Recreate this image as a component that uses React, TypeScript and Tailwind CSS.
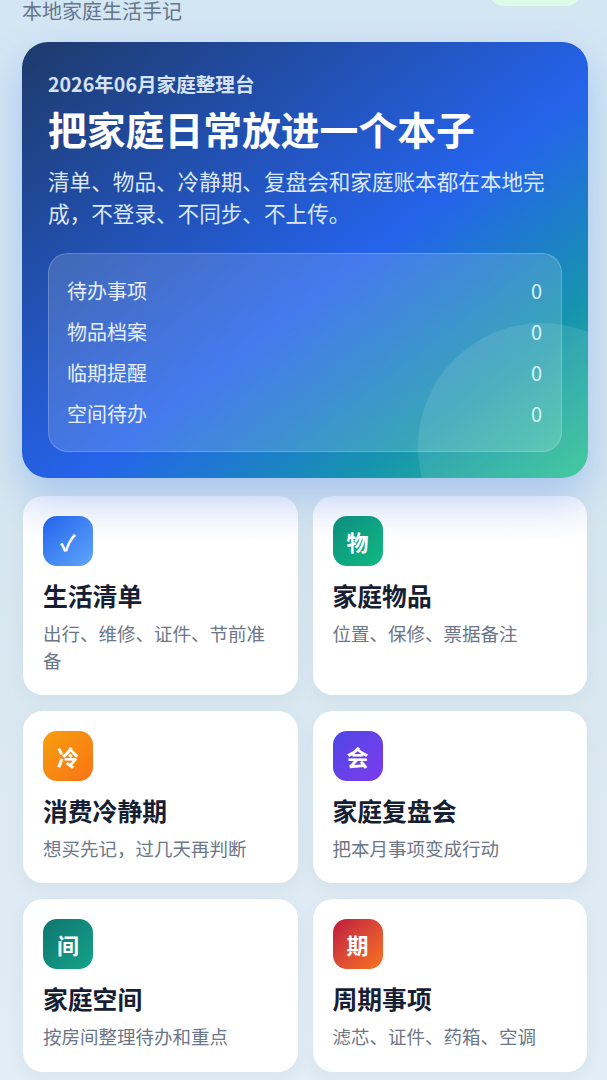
const stats = ['待办事项', '物品档案', '临期提醒', '空间待办']

type Feature = {
  title: string
  desc: string
  icon: string
  color: string
  height: string
  tint?: boolean
}

const features: Feature[] = [
  { title: '生活清单', desc: '出行、维修、证件、节前准备', icon: '✓', color: 'from-[#2563eb] to-[#60a5fa]', height: 'h-[199px]', tint: true },
  { title: '家庭物品', desc: '位置、保修、票据备注', icon: '物', color: 'from-[#0f8f7f] to-[#10b981]', height: 'h-[199px]', tint: true },
  { title: '消费冷静期', desc: '想买先记，过几天再判断', icon: '冷', color: 'from-[#f59e0b] to-[#f97316]', height: 'h-[172px]' },
  { title: '家庭复盘会', desc: '把本月事项变成行动', icon: '会', color: 'from-[#4f46e5] to-[#7c3aed]', height: 'h-[172px]' },
  { title: '家庭空间', desc: '按房间整理待办和重点', icon: '间', color: 'from-[#0f766e] to-[#14a38b]', height: 'h-[173px]' },
  { title: '周期事项', desc: '滤芯、证件、药箱、空调', icon: '期', color: 'from-[#be123c] to-[#f97316]', height: 'h-[173px]' },
]

function FeatureCard({ item }: { item: Feature }) {
  return (
    <div className={`${item.height} rounded-[20px] px-[20px] pt-[20px] shadow-[0_6px_16px_rgba(100,130,170,0.07)] ${item.tint ? 'bg-gradient-to-b from-[#f0f4fc] via-white via-[22%] to-white' : 'bg-white'}`}>
      <div className={`flex h-[50px] w-[50px] items-center justify-center rounded-[14px] bg-gradient-to-br text-[22px] font-bold text-white ${item.color}`}>
        {item.icon}
      </div>
      <h2 className="mt-[12px] text-[24.8px] leading-[35px] font-bold text-[#172033]">{item.title}</h2>
      <p className="mt-[7px] text-[18.5px] leading-[27px] text-[#6b7689]">{item.desc}</p>
    </div>
  )
}

export default function App() {
  return (
    <div className="h-[1080px] w-[607px] overflow-hidden bg-gradient-to-b from-[#d3e6f4] via-[#d6e6ef] to-[#e2edf5] font-['Noto_Sans_CJK_SC','Noto_Sans',sans-serif]">
      <header className="flex h-[42px] items-start justify-between pl-[22px] pr-[24px]">
        <p className="mt-[1px] text-[20px] leading-[20px] text-[#66758a]">本地家庭生活手记</p>
        <div className="-mt-[30px] h-[36px] w-[96px] rounded-full bg-[#dcfce7]" />
      </header>

      <section className="relative ml-[22px] h-[436px] w-[566px] overflow-hidden rounded-[26px] bg-[linear-gradient(to_bottom_right,#1e3a6b_0%,#2563eb_55%,#1695ad_80%,#32c493_100%)] px-[26px] pt-[28px] shadow-[0_18px_40px_rgba(37,99,235,0.26)]">
        <div className="absolute -right-[78px] -bottom-[93px] h-[248px] w-[248px] rounded-full bg-white/10" />
        <div className="relative">
          <p className="text-[19.6px] leading-[28px] font-semibold text-[#d6e2f6]">2026年06月家庭整理台</p>
          <h1 className="mt-[3px] text-[38.8px] leading-[54px] font-bold text-white">把家庭日常放进一个本子</h1>
          <p className="mt-[10px] text-[21.6px] leading-[32px] text-[#dbe7fa]">清单、物品、冷静期、复盘会和家庭账本都在本地完成，不登录、不同步、不上传。</p>
          <div className="mt-[24px] flex h-[199px] flex-col justify-center rounded-[20px] border border-white/20 bg-white/15 pr-[19px] pl-[18px]">
            {stats.map((label) => (
              <div key={label} className="flex h-[41px] items-center justify-between text-[20px] text-[#e6eefb]">
                <span>{label}</span>
                <span className="text-[#d8f3f3]">0</span>
              </div>
            ))}
          </div>
        </div>
      </section>

      <div className="mt-[18px] grid grid-cols-[274.5px_274.5px] gap-x-[15px] gap-y-[16px] pl-[23px]">
        {features.map((item) => (
          <FeatureCard key={item.title} item={item} />
        ))}
      </div>
    </div>
  )
}
